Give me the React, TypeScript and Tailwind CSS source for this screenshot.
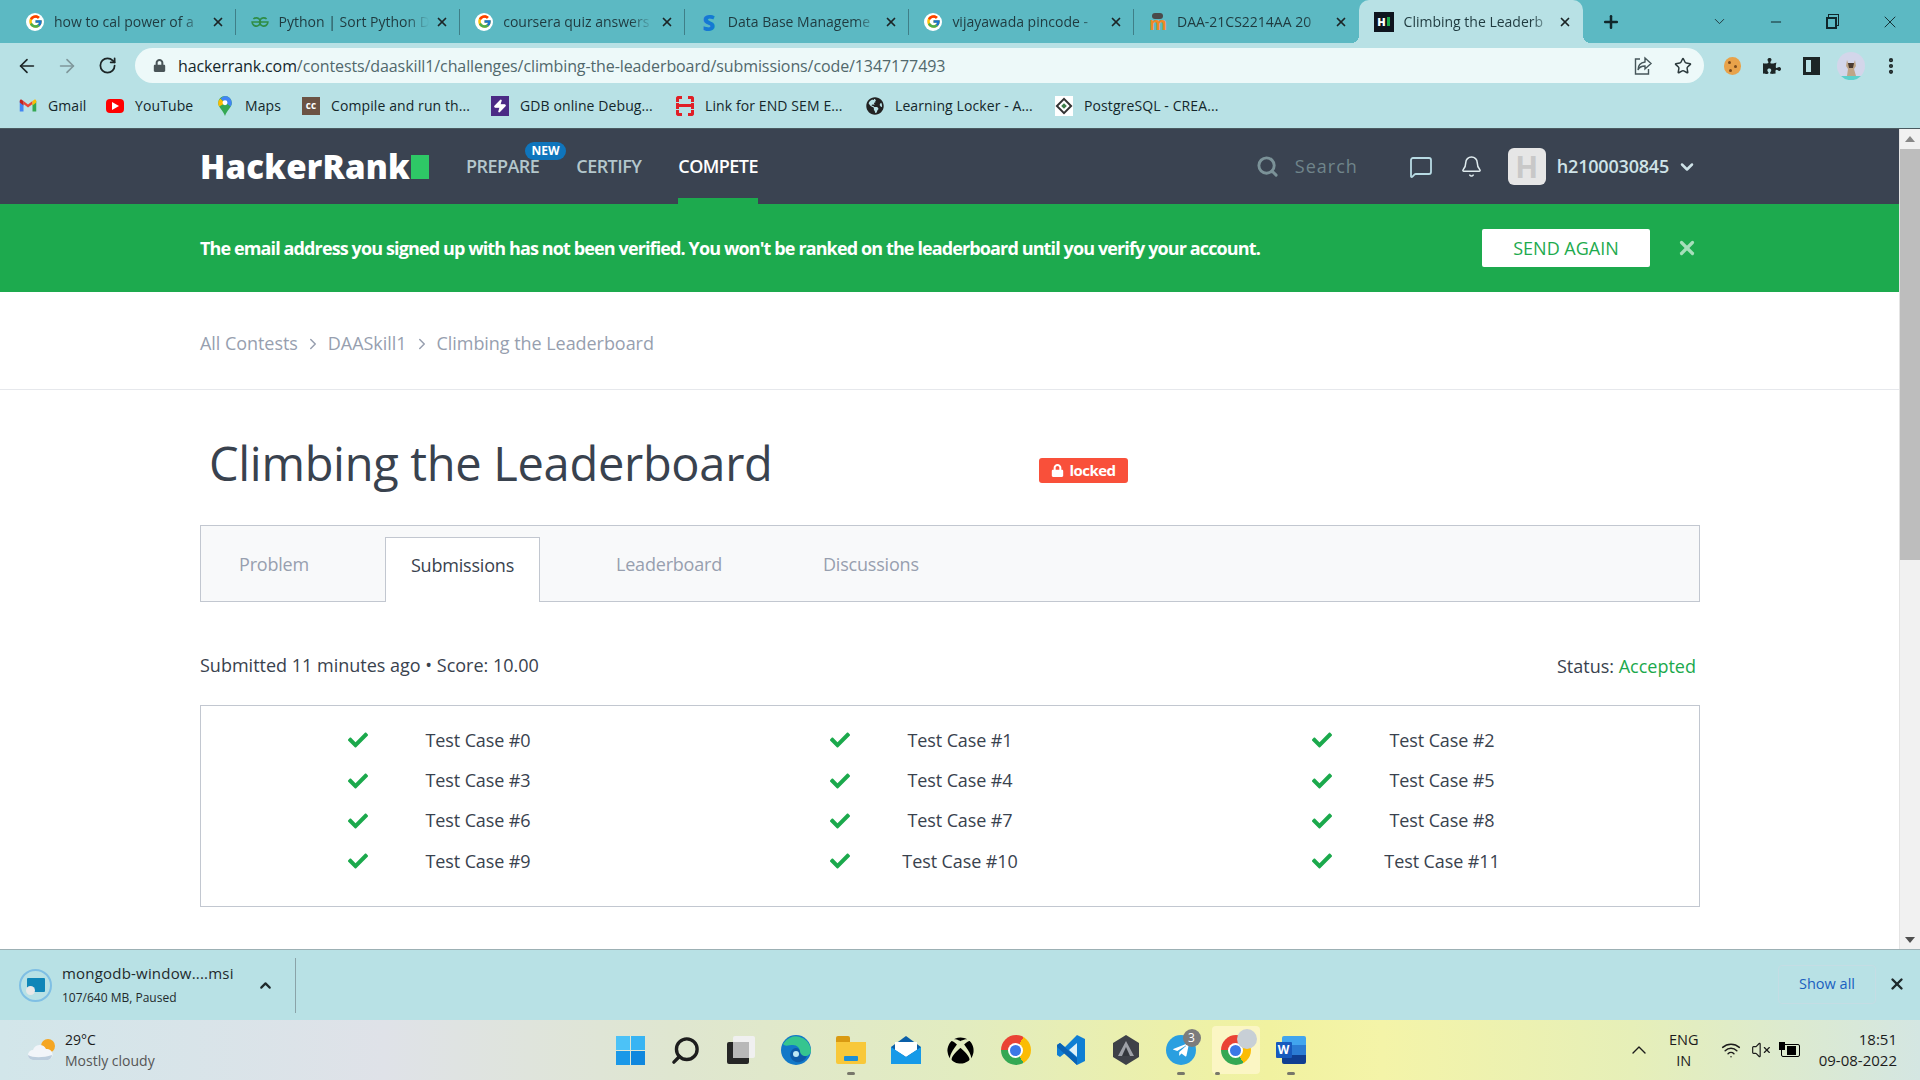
import React from "react";
import {
  ArrowLeft,
  ArrowRight,
  RotateCw,
  Star,
  MoreVertical,
  ChevronDown,
  ChevronUp,
  ChevronRight,
  X,
  Plus,
  Minus,
  Search,
  MessageSquare,
  Bell,
  Wifi,
  VolumeX,
  Zap,
} from "lucide-react";
import {
  FaLock,
  FaCheck,
  FaPuzzlePiece,
  FaXbox,
  FaGlobeAmericas,
  FaTelegramPlane,
} from "react-icons/fa";
import { FcGoogle } from "react-icons/fc";

const GoogleIcon = () => (
  <span className="flex h-[18px] w-[18px] shrink-0 items-center justify-center rounded-full bg-white">
    <FcGoogle size={15} />
  </span>
);

const GfgIcon = () => (
  <svg viewBox="0 0 24 16" className="h-[18px] w-[18px] shrink-0" fill="none" stroke="#2f8d46" strokeWidth="2.2">
    <path d="M12 8H22.5A5.5 5.5 0 1 1 20.8 4" />
    <path d="M12 8H1.5A5.5 5.5 0 1 0 3.2 4" />
  </svg>
);

const StudocuIcon = () => (
  <span className="flex h-[18px] w-[18px] shrink-0 items-center justify-center font-['Open_Sans'] text-[22px] font-extrabold leading-none text-[#1479d4]">
    S
  </span>
);

const MoodleIcon = () => (
  <span className="relative flex h-[18px] w-[18px] shrink-0 items-end justify-center">
    <span className="font-['Open_Sans'] text-[18px] font-bold leading-[16px] text-[#f08a24]">m</span>
    <span className="absolute left-[3px] top-0 h-[6px] w-[11px] rounded-sm bg-[#4a4a4a]" />
  </span>
);

const HrIcon = () => (
  <span className="flex h-5 w-5 shrink-0 items-center justify-center bg-[#0e141e]">
    <span className="flex items-center gap-px">
      <span className="font-['Open_Sans'] text-[11px] font-extrabold leading-none text-white">H</span>
      <span className="h-[9px] w-[3px] bg-[#1ba94c]" />
    </span>
  </span>
);

const tabs = [
  { title: "how to cal power of a", icon: <GoogleIcon /> },
  { title: "Python | Sort Python D", icon: <GfgIcon /> },
  { title: "coursera quiz answers", icon: <GoogleIcon /> },
  { title: "Data Base Manageme", icon: <StudocuIcon /> },
  { title: "vijayawada pincode -", icon: <GoogleIcon /> },
  { title: "DAA-21CS2214AA 20", icon: <MoodleIcon /> },
  { title: "Climbing the Leaderb", icon: <HrIcon />, active: true },
];

const GmailIcon = () => (
  <svg viewBox="0 0 24 18" className="h-[15px] w-[18px]">
    <path d="M1 17V3l5 4v10z" fill="#4285f4" />
    <path d="M23 17V3l-5 4v10z" fill="#34a853" />
    <path d="M6 7l6 4.5L18 7V3l-6 4.5L6 3z" fill="#ea4335" />
    <path d="M18 3l2-1.5c1.5-1 3-.2 3 1.5v2l-5 4z" fill="#fbbc04" />
    <path d="M6 3L4 1.5C2.5.5 1 1.300 1 3v2l5 4z" fill="#c5221f" />
  </svg>
);

const YoutubeIcon = () => (
  <span className="flex h-[14px] w-5 items-center justify-center rounded-[4px] bg-[#f00]">
    <span className="h-0 w-0 border-y-[4px] border-l-[7px] border-y-transparent border-l-white" />
  </span>
);

const MapsIcon = () => (
  <svg viewBox="0 0 16 22" className="h-5 w-4">
    <path d="M8 0a7.500 7.500 0 0 0-7.500 7.500C.5 12.500 6 16 8 22c2-6 7.500-9.500 7.500-14.500A7.500 7.500 0 0 0 8 0z" fill="#34a853" />
    <path d="M8 0a7.500 7.500 0 0 1 7.500 7.500c0 1.500-.5 2.800-1.200 4L3 3A7.500 7.500 0 0 1 8 0z" fill="#4285f4" />
    <path d="M3 3l5 5-6.500 3.500C.8 10.300.5 9 .5 7.500 .5 5.800 1.500 4 3 3z" fill="#fbbc04" />
    <circle cx="8" cy="7.500" r="2.700" fill="#fff" />
  </svg>
);

const CcIcon = () => (
  <span className="flex h-[18px] w-[18px] items-center justify-center bg-[#6b5344] font-['Open_Sans'] text-[10px] font-bold text-white">
    cc
  </span>
);

const GdbIcon = () => (
  <span className="flex h-5 w-[18px] items-center justify-center bg-[#4b2a85]">
    <Zap size={14} className="fill-white text-white" />
  </span>
);

const RedIcon = () => (
  <span className="flex h-5 w-5 items-center justify-center rounded-[3px] border-[3px] border-dashed border-[#e01f26]">
    <span className="h-[3px] w-full bg-[#e01f26]" />
  </span>
);

const PostgresIcon = () => (
  <span className="flex h-5 w-5 items-center justify-center bg-white">
    <span className="flex h-3 w-3 rotate-45 items-center justify-center border-2 border-[#333]">
      <span className="h-1 w-1 bg-[#3e7d4a]" />
    </span>
  </span>
);

const bookmarks = [
  { title: "Gmail", icon: <GmailIcon />, box: "w-[87px]" },
  { title: "YouTube", icon: <YoutubeIcon />, box: "w-[110px]" },
  { title: "Maps", icon: <MapsIcon />, box: "w-[86px]" },
  { title: "Compile and run th...", icon: <CcIcon />, box: "w-[189px]" },
  { title: "GDB online Debug...", icon: <GdbIcon />, box: "w-[185px]" },
  { title: "Link for END SEM E...", icon: <RedIcon />, box: "w-[190px]" },
  { title: "Learning Locker - A...", icon: <FaGlobeAmericas size={18} className="text-[#222]" />, box: "w-[189px]" },
  { title: "PostgreSQL - CREA...", icon: <PostgresIcon />, box: "w-[180px]" },
];

const ChromeTab = ({ title, icon, active }: { title: string; icon: React.ReactNode; active?: boolean }) => (
  <div
    className={
      active
        ? "relative flex h-[43px] w-[224.6px] items-center rounded-t-[10px] bg-[#b8e1e5] pl-[15px] pr-[11px] before:absolute before:bottom-0 before:left-[-8px] before:h-2 before:w-2 before:bg-[radial-gradient(circle_at_0_0,transparent_8px,#b8e1e5_8px)] after:absolute after:bottom-0 after:right-[-8px] after:h-2 after:w-2 after:bg-[radial-gradient(circle_at_100%_0,transparent_8px,#b8e1e5_8px)]"
        : "flex h-[43px] w-[224.6px] items-center pl-[15px] pr-[11px]"
    }
  >
    {icon}
    <span className="ml-[10px] w-[150px] overflow-hidden whitespace-nowrap text-[14px] text-[#1f3a3f] [mask-image:linear-gradient(90deg,#000_85%,transparent)]">
      {title}
    </span>
    <X size={14} strokeWidth={3} className="ml-auto text-[#1c2526]" />
  </div>
);

const ChromeBar = () => (
  <div className="font-['Open_Sans'] bg-[#b8e1e5]">
    <div className="flex h-[43px] items-center bg-[#5cb9c3] pl-[11px]">
      {tabs.map((tab, index) => (
        <div key={tab.title} className="flex items-center">
          <ChromeTab title={tab.title} icon={tab.icon} active={tab.active} />
          {index < 5 && <span className="h-[26px] w-px -ml-px bg-[#3f7f88]" />}
        </div>
      ))}
      <Plus size={20} strokeWidth={3} className="ml-[18px] text-[#10272b]" />
      <ChevronDown size={17} strokeWidth={1.25} className="ml-[90px] text-[#1c2f33]" />
      <Minus size={16} strokeWidth={1.5} className="ml-[40px] text-[#10272b]" />
      <span className="relative ml-[42px] h-[15px] w-[15px]">
        <span className="absolute left-[2px] top-0 h-[12px] w-[11px] border border-[#10272b]" />
        <span className="absolute bottom-0 left-0 h-[12px] w-[11px] border-2 border-[#10272b] bg-[#5cb9c3]" />
      </span>
      <X size={20} strokeWidth={1.1} className="ml-[39px] text-[#10272b]" />
    </div>

    <div className="flex h-[45px] items-center pb-[5px] pl-[16px] pt-[5px]">
      <ArrowLeft size={22} strokeWidth={1.8} className="text-[#1c2526]" />
      <ArrowRight size={22} strokeWidth={1.8} className="ml-[18px] text-[#7f979b]" />
      <RotateCw size={19} strokeWidth={2.2} className="ml-[20px] text-[#1c2526]" />
      <div className="ml-[18px] flex h-[35px] w-[1569px] items-center rounded-full bg-[#edf9f9] pl-[18px] pr-[12px]">
        <FaLock size={13} className="text-[#4a5558]" />
        <span className="ml-[12px] whitespace-nowrap text-[16px] tracking-[-0.1px] text-[#51686c]">
          <span className="text-[#14272b]">hackerrank.com</span>/contests/daaskill1/challenges/climbing-the-leaderboard/submissions/code/1347177493
        </span>
        <svg viewBox="0 0 20 20" className="ml-auto h-[20px] w-[20px]" fill="none" stroke="#46565a" strokeWidth="1.4">
          <path d="M7 3H2.500v15h13v-5" />
          <path d="M12 2l6 5.500-6 5.500V10c-4 0-6 1.500-7 4 0-5 3-7.500 7-8z" />
        </svg>
        <Star size={18} strokeWidth={2} className="ml-[21px] text-[#2c3a3d]" />
      </div>
      <span className="relative ml-[20px] h-[18px] w-[17px] rounded-full bg-[#e8a24a]">
        <span className="absolute left-[4px] top-[4px] h-[3px] w-[3px] rounded-full bg-[#7a4a1c]" />
        <span className="absolute left-[10px] top-[8px] h-[3px] w-[3px] rounded-full bg-[#7a4a1c]" />
        <span className="absolute left-[5px] top-[12px] h-[3px] w-[3px] rounded-full bg-[#7a4a1c]" />
      </span>
      <FaPuzzlePiece size={18} className="ml-[22px] text-[#1c2526]" />
      <span className="ml-[22px] flex h-[18px] w-[17px] justify-end border-[3px] border-[#1c2526]">
        <span className="w-[6px] bg-[#1c2526]" />
      </span>
      <svg viewBox="0 0 28 28" className="ml-[17px] h-7 w-7">
        <circle cx="14" cy="14" r="14" fill="#d3d6ea" />
        <path d="M4 24h20a14 14 0 0 1-20 0z" fill="#5cd0cc" />
        <path d="M10 8l1 3h6l1-3 1 6-2 3 2 7h-9l1-7-2-3z" fill="#bfa587" />
        <path d="M11 11h6l-1 5h-4z" fill="#4a3a30" />
      </svg>
      <MoreVertical size={20} strokeWidth={3} className="ml-[16px] text-[#1c2526]" />
    </div>

    <div className="flex h-[41px] items-center border-b border-[#4a5a60] pb-[5px] pl-[19px] text-[14px] tracking-[0.1px] text-[#14272b]">
      {bookmarks.map((bookmark) => (
        <div key={bookmark.title} className={`flex items-center gap-[11px] whitespace-nowrap ${bookmark.box}`}>
          <span className="flex h-5 w-[18px] items-center justify-center">{bookmark.icon}</span>
          <span>{bookmark.title}</span>
        </div>
      ))}
    </div>
  </div>
);

const TopNav = () => (
  <div className="flex h-[75px] items-center bg-[#3a4351] pl-[200px] pr-[202px]">
    <span className="text-[33px] font-extrabold leading-none tracking-[0.2px] text-white">HackerRank</span>
    <span className="ml-[1px] h-[24px] w-[18px] bg-[#2ec866]" />
    <div className="relative ml-[37px] flex h-full items-center text-[18px] font-semibold tracking-[-0.55px] text-[#b4c7cc]">
      <span>PREPARE</span>
      <span className="absolute left-[59px] top-[13px] flex h-[18px] w-[41px] items-center justify-center rounded-full bg-[#0f75bc] text-[12px] font-bold tracking-normal text-white">
        NEW
      </span>
      <span className="ml-[37px]">CERTIFY</span>
      <span className="ml-[37px] flex h-full items-center border-b-[6px] border-[#1daa4e] pt-[6px] text-white">COMPETE</span>
    </div>
    <div className="ml-auto flex items-center">
      <Search size={23} strokeWidth={3} className="text-[#7b9298]" />
      <span className="ml-[16px] text-[18px] tracking-[1px] text-[#70858b]">Search</span>
      <MessageSquare size={24} strokeWidth={1.8} className="ml-[51px] text-[#b8dbe4]" />
      <Bell size={23} strokeWidth={1.6} className="ml-[27px] text-[#e0ecef]" />
      <span className="ml-[25px] flex h-[37px] w-[38px] items-center justify-center rounded-[6px] bg-[#e6e6e6] text-[30px] font-bold text-[#c8c8c8]">
        H
      </span>
      <span className="ml-[11px] text-[18px] font-semibold tracking-[-0.2px] text-[#cfe3e8]">h2100030845</span>
      <ChevronDown size={20} strokeWidth={3} className="ml-[8px] text-[#cfe3e8]" />
    </div>
  </div>
);

const VerifyBanner = () => (
  <div className="flex h-[88px] items-center bg-[#1daa4e] pl-[200px] pr-[201px]">
    <span className="text-[18px] font-bold tracking-[-0.88px] text-white">
      The email address you signed up with has not been verified. You won't be ranked on the leaderboard until you verify your account.
    </span>
    <span className="ml-auto flex h-[38px] w-[168px] items-center justify-center rounded-[2px] bg-white text-[18px] text-[#1daa4e]">
      SEND AGAIN
    </span>
    <X size={22} strokeWidth={3.5} className="ml-[26px] text-[#a6dfba]" />
  </div>
);

const Breadcrumb = () => (
  <div className="flex h-[98px] items-center border-b border-[#e6e8ec] pl-[200px] pt-[6px] text-[18px] tracking-[-0.05px] text-[#979faf]">
    <span>All Contests</span>
    <ChevronRight size={18} strokeWidth={2} className="mx-[6px]" />
    <span>DAASkill1</span>
    <ChevronRight size={18} strokeWidth={2} className="mx-[6px]" />
    <span>Climbing the Leaderboard</span>
  </div>
);

const testCases = Array.from({ length: 12 }, (_, index) => `Test Case #${index}`);

const Submission = () => (
  <div className="w-[1500px] ml-[200px]">
    <div className="flex h-[135px] items-center pl-[9px] pt-[12px]">
      <h1 className="w-[830px] text-[47px] font-normal leading-none tracking-[-0.3px] text-[#39424e]">Climbing the Leaderboard</h1>
      <span className="mt-[13px] flex h-[25px] w-[89px] items-center justify-center gap-[5px] rounded-[3px] bg-[#f9503a] text-[15px] font-bold tracking-[-0.5px] text-white">
        <FaLock size={13} />
        locked
      </span>
    </div>

    <div className="flex h-[77px] items-end border border-[#c2c7d0] bg-[#f8f9fa] text-[18px] tracking-[-0.2px] text-[#979faf]">
      <span className="flex h-[64px] w-[184px] items-center pb-[10px] pl-[38px]">Problem</span>
      <span className="-mb-px flex h-[65px] w-[155px] items-center justify-center border-x border-t border-[#c2c7d0] bg-white pb-[10px] text-[#39424e]">Submissions</span>
      <span className="flex h-[64px] w-[283px] items-center pb-[10px] pl-[76px]">Leaderboard</span>
      <span className="flex h-[64px] items-center pb-[10px]">Discussions</span>
    </div>

    <div className="flex h-[103px] items-center justify-between pr-[4px] pt-[24px] text-[18px] text-[#39424e]">
      <span>Submitted 11 minutes ago • Score: 10.00</span>
      <span className="pt-[1px]">
        Status: <span className="text-[#1ba94c]">Accepted</span>
      </span>
    </div>

    <div className="grid h-[202px] grid-cols-3 content-start border border-[#c2c7d0] pl-[36px] pr-[16px] pt-[14px] text-[18px] tracking-[-0.1px] text-[#39424e]">
      {testCases.map((name) => (
        <div key={name} className="flex h-[40.4px] items-center pl-[111px]">
          <FaCheck size={20} className="shrink-0 text-[#1ba94c]" />
          <span className="ml-[30px] w-[160px] text-center">{name}</span>
        </div>
      ))}
    </div>
  </div>
);

const Scrollbar = () => (
  <div className="flex w-[21px] shrink-0 flex-col items-center border-l border-[#e4e4e4] bg-[#f1f1f1]">
    <span className="mb-[7px] mt-[7px] h-0 w-0 border-x-[5px] border-b-[6px] border-x-transparent border-b-[#888]" />
    <span className="h-[411px] w-full bg-[#bdbdbd]" />
    <span className="mt-auto mb-[6px] h-0 w-0 border-x-[5px] border-t-[6px] border-x-transparent border-t-[#505050]" />
  </div>
);

const DownloadBar = () => (
  <div className="flex h-[71px] items-center border-t border-[#9cb0b4] bg-[#b8e1e5] pl-[19px] font-['Open_Sans'] text-[#1f2a2c]">
    <span className="relative flex h-[33px] w-[33px] items-center justify-center rounded-full border-[2px] border-[#7fbfe4]">
      <span className="h-[14px] w-[18px] rounded-[1px] bg-[#0f86b8]" />
      <span className="absolute bottom-[5px] left-[5px] h-[9px] w-[9px] rounded-full bg-[#e8e8e8]" />
    </span>
    <div className="ml-[10px] flex w-[198px] flex-col pb-[2px]">
      <span className="text-[15px] leading-[22px] tracking-[0.2px]">mongodb-window....msi</span>
      <span className="mt-[6px] text-[12px] leading-[16px]">107/640 MB, Paused</span>
    </div>
    <ChevronUp size={17} strokeWidth={3} className="ml-[-3px]" />
    <span className="ml-[21px] h-[55px] w-px bg-[#8aa3a8]" />
    <span className="mb-[2px] ml-auto flex h-[39px] w-[98px] items-center justify-center rounded-[4px] border border-[#c4dde4] text-[14.5px] font-medium text-[#1a5fc0]">
      Show all
    </span>
    <X size={18} strokeWidth={3.2} className="mb-[2px] ml-[12px] mr-[14px] text-[#1f2a2c]" />
  </div>
);

const ChromeLogo = () => (
  <span className="flex h-[30px] w-[30px] items-center justify-center rounded-full bg-[conic-gradient(from_-90deg,#ea4335_0_120deg,#fbbc04_120deg_240deg,#34a853_240deg_360deg)]">
    <span className="flex h-[15px] w-[15px] items-center justify-center rounded-full bg-white">
      <span className="h-[11px] w-[11px] rounded-full bg-[#3b78e7]" />
    </span>
  </span>
);

const taskItems: React.ReactNode[] = [
  <span key="start" className="grid h-[29px] w-[29px] grid-cols-2 gap-[1px]">
    <span className="bg-[#4cc2f7]" />
    <span className="bg-[#38b4f3]" />
    <span className="bg-[#1a98e8]" />
    <span className="bg-[#0f87de]" />
  </span>,
  <Search key="search" size={31} strokeWidth={2.6} className="-scale-x-100 text-[#1d1d1d]" />,
  <span key="view" className="relative h-[28px] w-[28px]">
    <span className="absolute right-0 top-0 h-[22px] w-[22px] rounded-[2px] bg-[#f0f0f0]" />
    <span className="absolute bottom-0 left-0 h-[22px] w-[22px] rounded-[2px] bg-[#262626]" />
    <span className="absolute left-[6px] top-[6px] h-[16px] w-[16px] bg-[#b8b8b8]" />
  </span>,
  <svg key="edge" viewBox="0 0 30 30" className="h-[30px] w-[30px]">
    <circle cx="15" cy="15" r="15" fill="#1278c8" />
    <path d="M2 9A15 15 0 0 1 30 15c0 4-3 6-6 6-4 0-5-2-5-4 0-4-3-7-7-7-4 0-8 2-10-1z" fill="#36c58f" />
    <path d="M12 14c3-2 6-1 7 2 0 3 3 6 7 5-2 5-7 7-11 6-6-2-8-9-3-13z" fill="#0d5aa8" />
    <circle cx="15" cy="19" r="3" fill="#bfe7f5" />
  </svg>,
  <span key="files" className="relative flex h-[28px] w-[30px] flex-col">
    <span className="h-[6px] w-[14px] rounded-t-[2px] bg-[#d99a12]" />
    <span className="flex flex-1 items-end justify-center rounded-b-[2px] bg-[#f8c83a] pb-[3px]">
      <span className="h-[5px] w-[14px] rounded-[1px] bg-[#1c8fd6]" />
    </span>
  </span>,
  <svg key="mail" viewBox="0 0 30 28" className="h-7 w-[30px]">
    <path d="M0 11L15 0l15 11v17H0z" fill="#0b5fa8" />
    <path d="M4 6h22v8l-11 7-11-7z" fill="#fff" />
    <path d="M0 11l15 10 15-10v17H0z" fill="#169ae8" />
  </svg>,
  <FaXbox key="xbox" size={27} className="text-black" />,
  <ChromeLogo key="chrome" />,
  <svg key="code" viewBox="0 0 28 30" className="h-[30px] w-7">
    <path d="M20 0l8 4v22l-8 4-12-12-5 4-3-2v-10l3-2 5 4z" fill="#0f7ed4" />
    <path d="M20 8l-8 7 8 7z" fill="#dff0f8" />
    <path d="M0 10l3-2 17 15v7L0 12z" fill="#0a62b4" />
  </svg>,
  <svg key="crystal" viewBox="0 0 26 30" className="h-[30px] w-[26px]">
    <path d="M13 0l13 8v14l-13 8-13-8V8z" fill="#3e4148" />
    <path d="M13 6l8 15H5z" fill="#9ea1a8" />
    <path d="M13 12l4 9H9z" fill="#34373d" />
  </svg>,
  <span key="telegram" className="relative flex h-[30px] w-[30px] items-center justify-center rounded-full bg-[#2a9fe0]">
    <FaTelegramPlane size={18} className="text-white" />
    <span className="absolute -right-[5px] -top-[6px] flex h-[18px] w-[18px] items-center justify-center rounded-full bg-[#7c7c7c] text-[12px] text-white">
      3
    </span>
  </span>,
  <span key="active" className="relative flex h-[48px] w-[48px] items-center justify-center rounded-[4px] bg-[#fbf6c4]">
    <ChromeLogo />
    <span className="absolute right-[3px] top-[3px] h-5 w-5 rounded-full bg-[#c8cfd6]" />
  </span>,
  <span key="word" className="relative flex h-7 w-[30px] justify-end">
    <span className="flex h-full w-[24px] flex-col">
      <span className="flex-1 rounded-t-[2px] bg-[#41a5ee]" />
      <span className="flex-1 bg-[#2b7cd3]" />
      <span className="flex-1 rounded-b-[2px] bg-[#103f91]" />
    </span>
    <span className="absolute left-0 top-[6px] flex h-[16px] w-[16px] items-center justify-center rounded-[1px] bg-[#185abd] text-[12px] font-bold text-white">
      W
    </span>
  </span>,
];

const runningDots = ["", "", "", "", "w-[8px]", "", "", "", "", "", "w-[8px]", "w-[5px]", "w-[8px]"];

const Taskbar = () => (
  <div className="flex h-[60px] items-center bg-[linear-gradient(90deg,#d2e6ea_0%,#dfe2e8_20%,#dfe6d0_35%,#e2ecc0_50%,#f1f2a0_66%,#f4f4a8_72%,#e6efb8_85%,#d4e6e2_100%)] pl-[27px] font-['Open_Sans'] text-[#1c1c1c]">
    <svg viewBox="0 0 30 24" className="h-[24px] w-[30px] shrink-0">
      <circle cx="21" cy="8" r="7" fill="#f5a623" />
      <path d="M6 22a5 5 0 0 1 0-10 7 7 0 0 1 13-1 5.500 5.500 0 0 1 2 11z" fill="#f2f5f9" />
      <path d="M1 17c5 3 15 3 24 0a5.500 5.500 0 0 1-4 5H6a5 5 0 0 1-5-5z" fill="#bccddd" />
    </svg>
    <div className="ml-[8px] flex w-[120px] flex-col text-[14px] leading-[21px]">
      <span>29°C</span>
      <span className="text-[#555]">Mostly cloudy</span>
    </div>
    <div className="ml-[418px] flex items-center">
      {taskItems.map((item, index) => (
        <div key={index} className="relative flex h-[48px] w-[55px] items-center justify-center">
          {item}
          {runningDots[index] && (
            <span className={`absolute bottom-[-1px] h-[3px] rounded-full bg-[#77776a] ${runningDots[index]} ${index === 11 ? "left-[7px]" : ""}`} />
          )}
        </div>
      ))}
    </div>
    <ChevronUp size={24} strokeWidth={1.4} className="ml-auto" />
    <div className="ml-[16px] flex w-[34px] flex-col items-center text-[14.5px] leading-[21px]">
      <span>ENG</span>
      <span>IN</span>
    </div>
    <Wifi size={20} strokeWidth={1.8} className="ml-[20px]" />
    <VolumeX size={20} strokeWidth={1.4} className="ml-[10px]" />
    <span className="relative ml-[10px] flex h-[13px] w-[19px] items-center rounded-[2px] border border-black pl-[5px]">
      <span className="h-[9px] w-[9px] bg-black" />
      <span className="absolute -left-[3px] -top-[3px] h-[8px] w-[6px] bg-black" />
    </span>
    <div className="ml-[19px] mr-[23px] flex flex-col items-end text-[15px] leading-[21px]">
      <span>18:51</span>
      <span>09-08-2022</span>
    </div>
  </div>
);

export default function App() {
  return (
    <div className="flex h-[1080px] w-[1920px] flex-col overflow-hidden bg-white font-['Open_Sans',sans-serif]">
      <ChromeBar />
      <div className="flex min-h-0 flex-1">
        <div className="min-w-0 flex-1 overflow-hidden">
          <TopNav />
          <VerifyBanner />
          <Breadcrumb />
          <Submission />
        </div>
        <Scrollbar />
      </div>
      <DownloadBar />
      <Taskbar />
    </div>
  );
}
